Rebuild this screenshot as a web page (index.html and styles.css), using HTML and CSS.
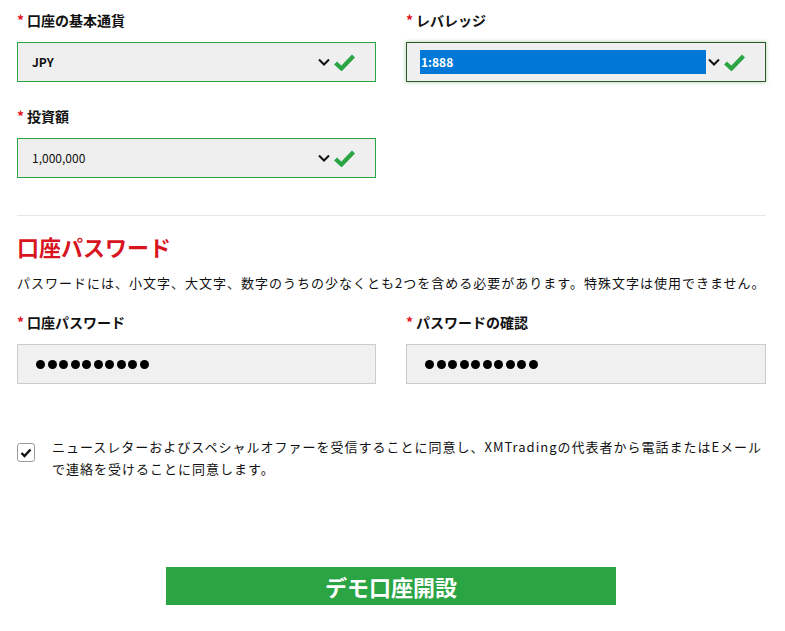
FILE: index.html
```html
<!DOCTYPE html>
<html lang="ja">
<head>
    <meta charset="UTF-8">
    <meta name="viewport" content="width=device-width, initial-scale=1.0">
    <title>デモ口座開設</title>
    <link rel="stylesheet" href="styles.css">
</head>
<body>
    <div class="form">
        <div class="row">
            <div class="field">
                <label class="label"><span class="req">*</span>口座の基本通貨</label>
                <div class="select valid">
                    <span class="value bold">JPY</span>
                    <svg class="chev" width="12" height="8" viewBox="0 0 12 8"><path d="M1 1.5 L6 6.5 L11 1.5" fill="none" stroke="#111" stroke-width="2"/></svg>
                    <svg class="check" width="21" height="17" viewBox="0 0 21 17"><path d="M1.5 9 L7.5 14.5 L19.5 2" fill="none" stroke="#2ba444" stroke-width="4.2"/></svg>
                </div>
            </div>
            <div class="field">
                <label class="label"><span class="req">*</span>レバレッジ</label>
                <div class="select focused">
                    <span class="value selected">1:888</span>
                    <svg class="chev" width="12" height="8" viewBox="0 0 12 8"><path d="M1 1.5 L6 6.5 L11 1.5" fill="none" stroke="#111" stroke-width="2"/></svg>
                    <svg class="check" width="21" height="17" viewBox="0 0 21 17"><path d="M1.5 9 L7.5 14.5 L19.5 2" fill="none" stroke="#2ba444" stroke-width="4.2"/></svg>
                </div>
            </div>
        </div>

        <div class="row">
            <div class="field">
                <label class="label"><span class="req">*</span>投資額</label>
                <div class="select valid">
                    <span class="value">1,000,000</span>
                    <svg class="chev" width="12" height="8" viewBox="0 0 12 8"><path d="M1 1.5 L6 6.5 L11 1.5" fill="none" stroke="#111" stroke-width="2"/></svg>
                    <svg class="check" width="21" height="17" viewBox="0 0 21 17"><path d="M1.5 9 L7.5 14.5 L19.5 2" fill="none" stroke="#2ba444" stroke-width="4.2"/></svg>
                </div>
            </div>
        </div>

        <hr class="divider">

        <h2 class="section-title">口座パスワード</h2>
        <p class="hint">パスワードには、小文字、大文字、数字のうちの少なくとも2つを含める必要があります。特殊文字は使用できません。</p>

        <div class="row">
            <div class="field">
                <label class="label"><span class="req">*</span>口座パスワード</label>
                <div class="password">
                    <span class="dot"></span><span class="dot"></span><span class="dot"></span><span class="dot"></span><span class="dot"></span>
                    <span class="dot"></span><span class="dot"></span><span class="dot"></span><span class="dot"></span><span class="dot"></span>
                </div>
            </div>
            <div class="field">
                <label class="label"><span class="req">*</span>パスワードの確認</label>
                <div class="password">
                    <span class="dot"></span><span class="dot"></span><span class="dot"></span><span class="dot"></span><span class="dot"></span>
                    <span class="dot"></span><span class="dot"></span><span class="dot"></span><span class="dot"></span><span class="dot"></span>
                </div>
            </div>
        </div>

        <div class="consent">
            <span class="checkbox">
                <svg width="12" height="10" viewBox="0 0 12 10"><path d="M1.5 5 L4.5 8 L10.5 1.5" fill="none" stroke="#111" stroke-width="2.4"/></svg>
            </span>
            <p class="consent-text">ニュースレターおよびスペシャルオファーを受信することに同意し、XMTradingの代表者から電話またはEメールで連絡を受けることに同意します。</p>
        </div>

        <button class="submit" type="button">デモ口座開設</button>
    </div>
</body>
</html>
```

FILE: styles.css
```css
body {
    margin: 0;
    padding: 0;
    background-color: #ffffff;
    font-family: "Noto Sans CJK JP", "Liberation Sans", sans-serif;
    color: #111111;
}

.form {
    width: 749px;
    padding: 10px 0 0 17px;
}

.row {
    display: grid;
    grid-template-columns: 359px 360px;
    column-gap: 30px;
    margin-bottom: 24px;
}

.label {
    display: block;
    font-size: 14px;
    font-weight: bold;
    line-height: 20px;
    margin-bottom: 12px;
}

.req {
    color: #e3101e;
    margin-right: 3px;
}

.select {
    display: flex;
    align-items: center;
    height: 40px;
    box-sizing: border-box;
    border: 1px solid #2ba444;
    background-color: #efefef;
    padding: 0 20px 0 14px;
}

.select.focused {
    border-color: #2c5a2c;
    box-shadow: 0 0 4px rgba(60, 140, 60, 0.45);
    padding-left: 13px;
}

.value {
    flex: 1;
    font-size: 12px;
    line-height: 24px;
    color: #111111;
}

.value.bold {
    font-weight: bold;
}

.value.selected {
    background-color: #0078d7;
    color: #ffffff;
    font-weight: bold;
    padding-left: 1px;
    margin-right: 2px;
}

.chev {
    margin-right: 4px;
}

.divider {
    border: none;
    border-top: 1px solid #e6e6e6;
    margin: 37px 0 15px 0;
}

.section-title {
    color: #d8151f;
    font-size: 22px;
    line-height: 30px;
    margin: 0 0 12px 0;
}

.hint {
    font-size: 13px;
    line-height: 20px;
    margin: 0 0 19px 0;
    white-space: nowrap;
    letter-spacing: 1px;
}

.password {
    display: flex;
    align-items: center;
    gap: 2.5px;
    height: 40px;
    box-sizing: border-box;
    border: 1px solid #cccccc;
    background-color: #f0f0f0;
    padding-left: 18px;
}

.dot {
    width: 9px;
    height: 9px;
    border-radius: 50%;
    background-color: #000000;
}

.consent {
    display: flex;
    align-items: flex-start;
    margin-top: 52px;
}

.checkbox {
    display: flex;
    align-items: center;
    justify-content: center;
    width: 16px;
    height: 17px;
    border: 1px solid #9a9a9a;
    border-radius: 3px;
    margin: 7px 17px 0 0;
    flex-shrink: 0;
}

.consent-text {
    font-size: 13px;
    line-height: 22px;
    margin: 0;
    width: 712px;
    letter-spacing: 1px;
}

.submit {
    display: block;
    width: 450px;
    height: 38px;
    margin: 87px 0 0 149px;
    border: none;
    background-color: #2ba444;
    color: #ffffff;
    font-family: "Noto Sans CJK JP", sans-serif;
    font-size: 22px;
    font-weight: bold;
    cursor: pointer;
}
```
